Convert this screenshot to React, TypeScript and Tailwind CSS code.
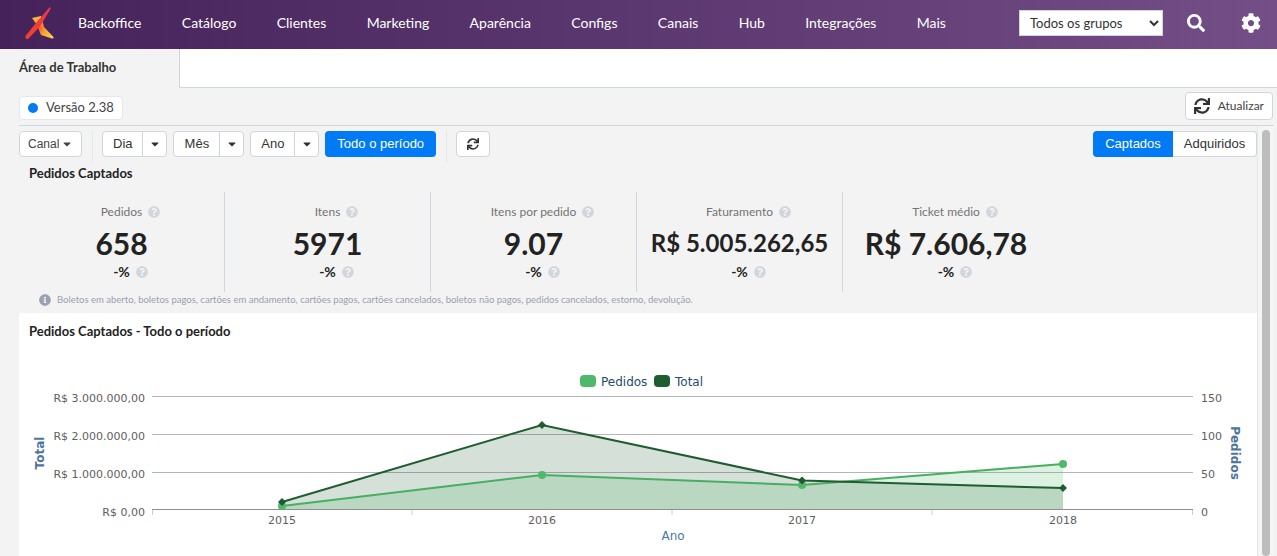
import { FaCaretDown, FaCog, FaInfoCircle, FaQuestionCircle, FaSearch, FaSync } from "react-icons/fa";

const NAV = ["Backoffice", "Catálogo", "Clientes", "Marketing", "Aparência", "Configs", "Canais", "Hub", "Integrações", "Mais"];
const SANS = { fontFamily: '"Lato", "Noto Sans", sans-serif' };
const HELV = { fontFamily: '"Liberation Sans", Arial, sans-serif' };

const STATS = [
  { label: "Pedidos", value: "658", big: true },
  { label: "Itens", value: "5971", big: true },
  { label: "Itens por pedido", value: "9.07", big: true },
  { label: "Faturamento", value: "R$ 5.005.262,65", big: false },
  { label: "Ticket médio", value: "R$ 7.606,78", big: true },
];

function Logo() {
  return (
    <svg width="30" height="34" viewBox="24 5 30 34" className="shrink-0">
      <defs>
        <radialGradient id="lg1" gradientUnits="userSpaceOnUse" cx="39" cy="27" r="15">
          <stop offset="0" stopColor="#f4582b" />
          <stop offset="0.45" stopColor="#f7a233" />
          <stop offset="1" stopColor="#f9cc52" />
        </radialGradient>
        <linearGradient id="lg2" x1="1" y1="0" x2="0" y2="1">
          <stop offset="0" stopColor="#e8384a" />
          <stop offset="1" stopColor="#f6402a" />
        </linearGradient>
      </defs>
      <path d="M32 17 L41 15 L44 26 L53.5 36 Q54 38 52 37.5 L41 34 L37 24 Z" fill="url(#lg1)" />
      <path d="M49.5 6.3 Q51 6 50.5 8 L40 25.5 L28 38 Q25 38.5 25.5 35 L36 22 Z" fill="url(#lg2)" />
    </svg>
  );
}

function Split({ label, w }: { label: string; w: string }) {
  return (
    <div className="flex h-6.5 rounded border border-gray-300 bg-white text-[#333]">
      <span className={`flex items-center justify-center border-r border-gray-300 ${w}`}>{label}</span>
      <span className="flex w-5.75 items-center justify-center">
        <FaCaretDown className="size-3" />
      </span>
    </div>
  );
}

function Stat({ label, value, big, last }: { label: string; value: string; big: boolean; last: boolean }) {
  return (
    <div className={`flex flex-col items-center ${last ? "" : "border-r border-gray-300"}`}>
      <div className="relative mt-3 text-xs leading-4 text-neutral-500">
        {label}
        <FaQuestionCircle className="absolute top-0.5 left-full ml-1.5 size-3 text-gray-300" />
      </div>
      <div className={`mt-1.25 flex h-9 items-center font-bold text-[#222] ${big ? "text-3xl" : "text-2xl"}`}>{value}</div>
      <div className="relative mt-0.25 text-sm leading-5 font-bold text-[#222]">
        -%
        <FaQuestionCircle className="absolute top-1 left-full ml-1.5 size-3 text-gray-300" />
      </div>
    </div>
  );
}

function Chart() {
  const text = { fontFamily: '"DejaVu Sans", sans-serif' };
  const dark: [number, number][] = [[282, 502], [542, 425], [802, 480.5], [1063, 488]];
  const green: [number, number][] = [[282, 506], [542, 475], [802, 485], [1063, 464]];
  const line = (p: [number, number][]) => p.map((q) => q.join(",")).join(" ");
  const area = (p: [number, number][]) => `282,509.5 ${line(p)} 1063,509.5`;
  return (
    <svg width="1277" height="206" viewBox="0 350 1277 206" className="-ml-4.75 block max-w-none">
      {[396.5, 434.5, 472.5].map((y) => (
        <line key={y} x1="152" x2="1193" y1={y} y2={y} stroke="#b5b5b5" />
      ))}
      <polygon points={area(dark)} fill="#1e5c2f" fillOpacity="0.19" />
      <polygon points={area(green)} fill="#4fb96a" fillOpacity="0.2" />
      <line x1="152" x2="1193" y1="509.5" y2="509.5" stroke="#8e8e8e" />
      {[152.5, 412, 672, 932, 1192.5].map((x) => (
        <line key={x} x1={x} x2={x} y1="510" y2="515" stroke="#c0d0e0" />
      ))}
      <polyline points={line(green)} fill="none" stroke="#47ae62" strokeWidth="2" />
      <polyline points={line(dark)} fill="none" stroke="#1f5c30" strokeWidth="2" />
      {green.map(([x, y]) => (
        <circle key={x} cx={x} cy={y} r="4" fill="#4fb96a" />
      ))}
      {dark.map(([x, y]) => (
        <polygon key={x} points={`${x},${y - 4} ${x + 4},${y} ${x},${y + 4} ${x - 4},${y}`} fill="#1f5c30" />
      ))}
      <g style={text} fontSize="11" fill="#606060" textAnchor="end">
        <text x="145" y="402">R$ 3.000.000,00</text>
        <text x="145" y="440">R$ 2.000.000,00</text>
        <text x="145" y="478">R$ 1.000.000,00</text>
        <text x="145" y="516">R$ 0,00</text>
      </g>
      <g style={text} fontSize="11" fill="#606060">
        <text x="1201" y="402">150</text>
        <text x="1201" y="440">100</text>
        <text x="1201" y="478">50</text>
        <text x="1201" y="516">0</text>
      </g>
      <g style={text} fontSize="11" fill="#606060" textAnchor="middle">
        <text x="282" y="524">2015</text>
        <text x="542" y="524">2016</text>
        <text x="802" y="524">2017</text>
        <text x="1063" y="524">2018</text>
      </g>
      <text style={text} fontSize="12" fill="#4d759e" textAnchor="middle" x="673" y="540">Ano</text>
      <text style={text} fontSize="12" fontWeight="700" fill="#4d759e" textAnchor="middle" transform="translate(44 453) rotate(-90)">Total</text>
      <text style={text} fontSize="12" fontWeight="700" fill="#4d759e" textAnchor="middle" transform="translate(1231 453) rotate(90)">Pedidos</text>
      <rect x="580" y="375" width="16" height="12" rx="4" fill="#4fb96a" />
      <text style={text} fontSize="12" fill="#274b6d" x="601" y="386">Pedidos</text>
      <rect x="654" y="375" width="16" height="12" rx="4" fill="#1f5c30" />
      <text style={text} fontSize="12" fill="#274b6d" x="675" y="386">Total</text>
    </svg>
  );
}

export default function App() {
  return (
    <div className="flex h-screen flex-col overflow-hidden bg-[#f3f3f3]" style={SANS}>
      <nav className="flex h-[49px] shrink-0 items-center bg-linear-to-r from-[#45225a] to-[#744e86] pr-4 pb-1 pl-6 text-white">
        <Logo />
        <ul className="ml-6 flex w-217 justify-between text-sm">
          {NAV.map((n) => (
            <li key={n}>{n}</li>
          ))}
        </ul>
        <select className="ml-auto h-6.5 w-36 border border-gray-300 bg-white pl-1.5 text-[13px] text-[#333]" defaultValue="t">
          <option value="t">Todos os grupos</option>
        </select>
        <FaSearch className="ml-6 size-4.5" />
        <FaCog className="ml-9 size-5" />
      </nav>

      <div className="flex h-9.75 shrink-0">
        <div className="flex w-45 items-center border-r border-gray-300 pb-0.5 pl-4.75 text-[13px] font-bold text-[#333]">Área de Trabalho</div>
        <div className="flex-1 border-b border-gray-300 bg-white" />
      </div>

      <div className="flex h-9.25 shrink-0 items-end justify-between pr-1 pb-1.25 pl-4.75">
        <div className="flex h-6 items-center gap-2 rounded border border-gray-200 bg-white px-2 text-[13px] text-[#444]">
          <span className="size-2.5 rounded-full bg-[#007bf5]" />
          Versão 2.38
        </div>
        <button className="flex h-7 items-center gap-2 rounded border border-gray-300 bg-white px-2 text-xs text-[#444]">
          <FaSync className="size-4 text-[#333]" />
          Atualizar
        </button>
      </div>

      <div className="mr-1 ml-4.75 flex min-h-0 flex-1 border-t border-gray-300">
        <main className="flex min-w-0 flex-1 flex-col overflow-hidden">
          <div className="flex h-8 shrink-0 justify-between pt-1.25 text-[13px]" style={HELV}>
            <div className="flex items-start">
              <button className="flex h-6.5 items-center gap-0.5 rounded border border-gray-300 bg-white px-2 text-xs text-[#444]">
                Canal <FaCaretDown className="size-3" />
              </button>
              <span className="mr-2.25 ml-2.5 h-8 border-l border-gray-200" />
              <div className="flex gap-1.5">
                <Split label="Dia" w="w-10" />
                <Split label="Mês" w="w-11.5" />
                <Split label="Ano" w="w-11" />
                <button className="h-6.5 rounded bg-[#007bf5] px-3 text-white">Todo o período</button>
              </div>
              <span className="mr-2.25 ml-2.5 h-8 border-l border-gray-200" />
              <button className="flex h-6.5 w-8.5 items-center justify-center rounded border border-gray-300 bg-white">
                <FaSync className="size-3 text-[#333]" />
              </button>
            </div>
            <div className="flex h-6.5">
              <span className="flex w-20 items-center justify-center rounded-l bg-[#007bf5] text-white">Captados</span>
              <span className="flex w-21 items-center justify-center rounded-r border border-l-0 border-gray-300 bg-white text-[#333]">Adquiridos</span>
            </div>
          </div>

          <h2 className="mt-1.25 shrink-0 pl-2.5 text-[13px] leading-5 font-bold text-[#222]">Pedidos Captados</h2>

          <div className="mt-2.25 grid h-25 shrink-0 grid-cols-6 pr-0.5">
            {STATS.map((s, i) => (
              <Stat key={s.label} {...s} last={i === STATS.length - 1} />
            ))}
          </div>

          <p className="flex h-4 shrink-0 items-center gap-1.5 pl-5 text-[9.5px] text-gray-400">
            <FaInfoCircle className="size-3 text-gray-400" />
            Boletos em aberto, boletos pagos, cartões em andamento, cartões pagos, cartões cancelados, boletos não pagos, pedidos cancelados, estorno, devolução.
          </p>

          <section className="mt-1.25 flex-1 bg-white">
            <h3 className="h-9.25 pt-2 pl-2.5 text-[13px] leading-5 font-bold text-[#222]">Pedidos Captados - Todo o período</h3>
            <Chart />
          </section>
        </main>
        <aside className="flex w-4 shrink-0 justify-center border-l border-gray-200 bg-[#f5f5f5] pt-1">
          <div className="h-full w-2 rounded-full bg-[#bdbdbd]" />
        </aside>
      </div>
    </div>
  );
}
